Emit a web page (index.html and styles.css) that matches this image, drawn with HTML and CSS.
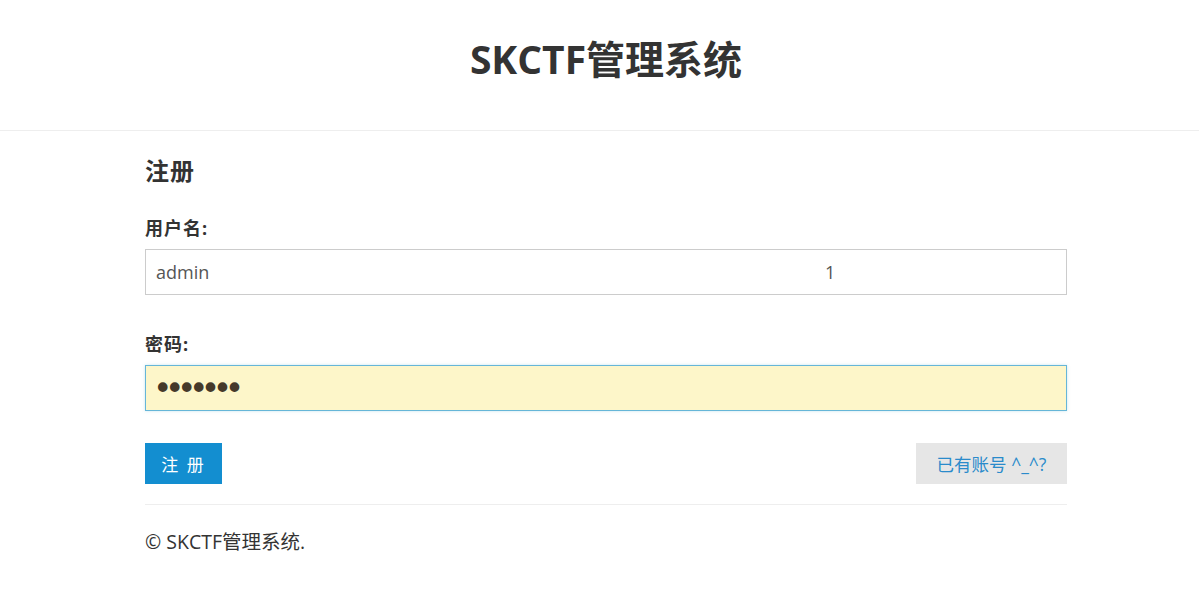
FILE: index.html
```html
<!DOCTYPE html>
<html lang="zh">
<head>
<meta charset="utf-8">
<title>SKCTF管理系统</title>
<link rel="stylesheet" href="styles.css">
</head>
<body>
<header class="header">
  <div class="container">
    <h1 class="site-title">SKCTF管理系统</h1>
  </div>
</header>
<main class="container main">
  <h2 class="form-title">注册</h2>
  <form class="form">
    <div class="field">
      <label class="label">用户名:</label>
      <div class="input-wrap">
        <input class="input" type="text" value="admin">
        <span class="overlay-text">1</span>
      </div>
    </div>
    <div class="field">
      <label class="label">密码:</label>
      <input class="input input-focus" type="password" value="1234567">
    </div>
    <div class="actions">
      <button class="btn btn-primary" type="button">注 册</button>
      <button class="btn btn-default" type="button">已有账号 ^_^?</button>
    </div>
  </form>
  <hr class="divider">
  <footer class="footer">© SKCTF管理系统.</footer>
</main>
</body>
</html>
```
FILE: styles.css
```css
* { box-sizing: border-box; }
html, body { margin: 0; padding: 0; background: #fff; }
body {
  font-family: "Open Sans", "Noto Sans CJK SC", sans-serif;
  color: #333;
}
.container {
  width: 922px;
  margin-left: 145px;
}
.header {
  height: 131px;
  border-bottom: 1px solid #eee;
  display: flex;
  align-items: center;
}
.site-title {
  margin: 0;
  padding-bottom: 16px;
  text-align: center;
  font-size: 39px;
  font-weight: 700;
  color: #333;
}
.main { padding-top: 24px; }
.form-title {
  margin: 0 0 29px;
  font-size: 24px;
  font-weight: 700;
  line-height: 32px;
  letter-spacing: 1px;
}
.field { margin-bottom: 37px; }
.field + .field { margin-bottom: 32px; }
.label {
  display: block;
  font-size: 18px;
  font-weight: 700;
  line-height: 24px;
  margin-bottom: 9px;
  letter-spacing: 1px;
}
.input-wrap { position: relative; }
.input {
  display: block;
  width: 100%;
  height: 46px;
  padding: 0 10px;
  font-family: inherit;
  font-size: 18px;
  color: #555;
  background: #fff;
  border: 1px solid #ccc;
  border-radius: 0;
  outline: none;
}
.input-focus {
  background: #fdf6c9;
  border-color: #66b6d8;
  box-shadow: 0 0 3px rgba(102, 182, 216, 0.35);
  color: #45392a;
  font-family: "DejaVu Sans", sans-serif;
  font-size: 33px;
  letter-spacing: -7.5px;
  padding-left: 7px;
}
.overlay-text {
  position: absolute;
  left: 680px;
  top: 11px;
  font-size: 18px;
  color: #555;
  pointer-events: none;
}
.actions {
  display: flex;
  justify-content: space-between;
  margin-top: 32px;
}
.btn {
  height: 41px;
  border: none;
  border-radius: 0;
  font-family: inherit;
  font-size: 17px;
  cursor: pointer;
}
.btn-primary {
  width: 77px;
  background: #138ed0;
  color: #fff;
  letter-spacing: 2px;
}
.btn-default {
  width: 151px;
  background: #e6e6e6;
  color: #2a8bcb;
  font-size: 17.5px;
}
.divider {
  border: 0;
  border-top: 1px solid #eee;
  margin: 20px 0 21px;
}
.footer {
  font-size: 19.5px;
  color: #333;
}
```
